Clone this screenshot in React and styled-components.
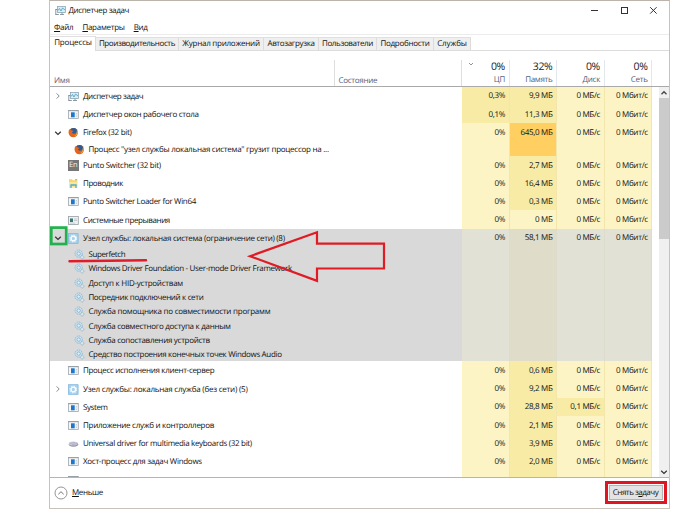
import React from "react";
import styled, { createGlobalStyle } from "styled-components";

const GlobalStyle = createGlobalStyle`
  body {
    margin: 0;
    background: #fff;
    overflow: hidden;
  }
  * {
    box-sizing: border-box;
  }
`;

const Page = styled.div`
  position: relative;
  width: 700px;
  height: 509px;
  padding-left: 49px;
  font-family: "Open Sans", "Noto Sans", sans-serif;
  font-size: 8px;
  color: #111;
  text-rendering: geometricPrecision;
  white-space: nowrap;
`;

const TaskWindow = styled.div`
  width: 621px;
  height: 509px;
  display: flex;
  flex-direction: column;
  border: 1px solid #c9c2bb;
  border-top: 1px solid #bbb4aa;
  background: #fff;
`;

const TitleBar = styled.div`
  height: 19px;
  display: flex;
  align-items: center;
  padding-left: 5px;
  gap: 2.5px;
`;

const WindowButtons = styled.div`
  display: flex;
  margin-left: auto;
  margin-right: 11px;
  gap: 20.5px;
`;

// 文字幅は letter-spacing で調整
const Label = styled.span`
  letter-spacing: ${(props) => props.$ls || 0}px;
`;

const MenuBar = styled.div`
  height: 14px;
  display: flex;
  align-items: center;
  padding-left: 4px;
  gap: 9px;
  letter-spacing: -0.28px;
`;

const TabBar = styled.div`
  height: 17px;
  display: flex;
  align-items: flex-end;
  border-top: 1px solid #ececec;
  border-bottom: 1px solid #dcdcdc;
`;

const Tab = styled.div`
  width: ${(props) => props.$w}px;
  height: ${(props) => (props.$active ? 15 : 13)}px;
  line-height: ${(props) => (props.$active ? 12 : 12)}px;
  margin-bottom: ${(props) => (props.$active ? -1 : 0)}px;
  padding-left: ${(props) => (props.$active ? 1 : 0)}px;
  text-align: center;
  letter-spacing: ${(props) => props.$ls || 0}px;
  background: ${(props) => (props.$active ? "#fff" : "#efefef")};
  border-top: 1px solid #e0e0e0;
  border-right: 1px solid #dcdcdc;
`;

const Header = styled.div`
  height: 35.6px;
  padding-top: 9px;
  display: grid;
  grid-template-columns: 284.5px 127.5px 47.5px 47.5px 47.5px 47.7px;
  border-bottom: 1px solid #a9a9a9;
  color: #53627c;
  letter-spacing: -0.28px;
`;

const HeadName = styled.div`
  display: flex;
  align-items: flex-end;
  padding: 0 0 0 4px;
  border-right: 1px solid #dedede;
`;

const HeadValue = styled.div`
  position: relative;
  padding-right: 3.5px;
  text-align: right;
  line-height: 12px;
  border-right: 1px solid #e2e8ee;
`;

const Percent = styled.div`
  height: 13.5px;
  line-height: 15px;
  font-size: 10.5px;
  letter-spacing: -0.3px;
  color: #222;
`;

const SortMark = styled.svg`
  position: absolute;
  left: 6px;
  top: 2px;
`;

const Body = styled.div`
  height: 390.4px;
  display: flex;
  overflow: hidden;
`;

const List = styled.div`
  width: 602.2px;
  margin-right: 6.8px;
`;

const Row = styled.div`
  display: grid;
  grid-template-columns: 412px 47.5px 47.5px 47.5px 47.7px;
  background: ${(props) => (props.$selected ? "#d9d9d9" : "#fff")};
`;

const NameLine = styled.div`
  height: 18.2px;
  padding-top: 1.4px;
  display: flex;
  align-items: center;
`;

const ChildLine = styled(NameLine)`
  height: ${(props) => props.$h}px;
  padding-left: 24px;
`;

const Expander = styled.div`
  width: 18px;
  height: 12px;
  padding-left: 4px;
  display: flex;
  align-items: center;
`;

const IconBox = styled.div`
  width: 15px;
  height: 11px;
  flex: none;
`;

const ChildIcon = styled(IconBox)`
  width: 14.4px;
`;

const heat = { low: "#fdf4c6", mid: "#f8eba6", high: "#ffd061", sel: "#e2e1d5", selMid: "#dfdcc9" };

const Cell = styled.div`
  padding-right: 3.4px;
  padding-top: 1.8px;
  line-height: 16.4px;
  text-align: right;
  letter-spacing: -0.3px;
  background: ${(props) => heat[props.$heat]};
  border-right: 1px solid ${(props) => (props.$heat.startsWith("sel") ? "#dddbcb" : "#f3e6ad")};
`;

const ScrollBar = styled.div`
  width: 10px;
  padding: 2px 0 1px;
  display: flex;
  flex-direction: column;
  align-items: center;
  background: #f0f0f0;
`;

const Thumb = styled.div`
  width: 10px;
  height: 141px;
  margin-top: 1px;
  margin-bottom: auto;
  background: #cbcbcb;
`;

const Footer = styled.div`
  flex: 1;
  display: flex;
  align-items: center;
  padding: 0 2.5px 0 4px;
  border-top: 1px solid #b5b5b5;
`;

const FewerLabel = styled.span`
  margin-left: 4px;
  letter-spacing: -0.35px;
`;

const EndTask = styled.div`
  width: 62px;
  height: 23px;
  margin-left: auto;
  padding: 1px;
  border: 3px solid #dd1622;
  background: #fff;
`;

const EndTaskButton = styled.div`
  height: 15px;
  line-height: 13px;
  text-align: center;
  letter-spacing: -0.5px;
  background: #e3e3e3;
  border: 1px solid #b4b4b4;
`;

const Marks = styled.svg`
  position: absolute;
  left: 0;
  top: 0;
`;

const MonitorIcon = () => (
  <svg width="11" height="11" viewBox="0 0 11 11">
    <rect x="2.5" y="1.5" width="8" height="6" fill="#d9eff8" stroke="#8fa6b3" strokeWidth=".8" />
    <path d="M3 5.5l1.5-2 1.5 2.5 1.5-3 2.5 2" fill="none" stroke="#3e9cc4" strokeWidth=".8" />
    <path d="M5 9.5h4M7 7.5v2" stroke="#8b9aa3" />
    <path d="M.8 4v6M.8 4.5h1.5M.8 9.5h3" fill="none" stroke="#7b8a94" strokeWidth=".9" />
  </svg>
);

const AppIcon = () => (
  <svg width="11" height="11" viewBox="0 0 11 11">
    <rect x=".5" y="1.5" width="9.8" height="8" fill="#f5f6f7" stroke="#a0a6aa" strokeWidth=".8" />
    <path d="M.5 1.7h9.8" stroke="#8d959b" strokeWidth=".8" />
    <rect x="3" y="3.3" width="3.7" height="5" fill="#1b78ce" />
    <path d="M7.7 4.5h1.3M7.7 6h1.3M7.7 7.5h1.3" stroke="#b4bcc2" strokeWidth=".6" />
  </svg>
);

const SystemIcon = () => (
  <svg width="11" height="11" viewBox="0 0 11 11">
    <rect x=".5" y="1.5" width="9.8" height="8" fill="#eef1f2" stroke="#989fa3" strokeWidth=".8" />
    <rect x="2" y="3.5" width="3" height="3.5" fill="#3f7376" />
    <path d="M6 4h3M6 5.5h3M2 8h5" stroke="#b3babd" strokeWidth=".7" />
  </svg>
);

const FirefoxIcon = () => (
  <svg width="11" height="11" viewBox="0 0 11 11">
    <circle cx="5.3" cy="5.6" r="4.7" fill="#de6420" />
    <circle cx="5.6" cy="4.3" r="3.3" fill="#285d9c" />
    <path d="M.8 3.2C1.7 2.4 3 3 3.5 3.3L5.4 4 4 5.2c.5 1.6 2.5 2 4 .7C7.3 8.6 4 9.4 2 7.5 1 6.5.7 4.8.8 3.2z" fill="#e8641b" />
    <path d="M9.4 3.5c.8 2.9-.7 5.5-3.5 5.8 1.8-.8 3-2.4 2.7-4.6z" fill="#f6b73c" />
  </svg>
);

const PuntoBox = styled.div`
  width: 10.5px;
  height: 10.5px;
  line-height: 10px;
  text-align: center;
  font-size: 7.5px;
  letter-spacing: -0.2px;
  color: #f4f4f4;
  background: #777;
`;

const FolderIcon = () => (
  <svg width="11" height="11" viewBox="0 0 11 11">
    <path d="M1 1.3h3l.7 1h4.6v7H1z" fill="#f6d568" />
    <path d="M1 3.8h8.3v5.8H1z" fill="#fbe696" />
    <path d="M3 10V7h5v3" fill="none" stroke="#4aafd9" strokeWidth="1.3" />
    <path d="M7.2 1.7h2" stroke="#54a36c" strokeWidth=".8" />
  </svg>
);

const ServiceIcon = () => (
  <svg width="11" height="11" viewBox="0 0 11 11">
    <rect x=".5" y=".7" width="9.6" height="9.6" fill="#a5d2ef" stroke="#79b1d8" strokeWidth=".7" />
    <circle cx="5.3" cy="5.5" r="2.3" fill="#a5d2ef" stroke="#fff" strokeWidth="1.3" />
    <circle cx="5.3" cy="5.5" r="3.4" fill="none" stroke="#fff" strokeWidth="1" strokeDasharray="1.3 1.37" />
  </svg>
);

const GearsIcon = () => (
  <svg width="11" height="11" viewBox="0 0 11 11">
    <circle cx="4.7" cy="4.6" r="3.6" fill="#cbe2ef" stroke="#8ab7d1" strokeWidth=".9" strokeDasharray="1.5 .6" />
    <circle cx="4.7" cy="4.6" r="1.7" fill="#e3edf2" stroke="#7faec9" strokeWidth=".8" />
    <circle cx="8.2" cy="8.3" r="1.7" fill="#d9e6ed" stroke="#86a9be" strokeWidth=".8" strokeDasharray="1 .5" />
  </svg>
);

const DriverIcon = () => (
  <svg width="11" height="11" viewBox="0 0 11 11">
    <ellipse cx="5.5" cy="6.3" rx="4.7" ry="2.4" fill="#8d8fa0" />
    <ellipse cx="5.2" cy="5.5" rx="4.4" ry="2.1" fill="#c9cbdc" />
    <path d="M2 5.5l5-1M4 6.7l5-1.2" stroke="#9799ad" strokeWidth=".5" />
  </svg>
);

const icons = {
  monitor: MonitorIcon,
  app: AppIcon,
  system: SystemIcon,
  firefox: FirefoxIcon,
  punto: () => <PuntoBox>En</PuntoBox>,
  folder: FolderIcon,
  service: ServiceIcon,
  gears: GearsIcon,
  driver: DriverIcon,
};

const Chevron = ({ dir }) => (
  <svg width="8" height="8" viewBox="0 0 8 8">
    {dir === "right" && <path d="M2.6 1.4l2.6 2.6-2.6 2.6" fill="none" stroke="#8b8b8b" />}
    {dir === "down" && <path d="M1.2 2.8l2.8 2.7 2.8-2.7" fill="none" stroke="#333" strokeWidth="1.2" />}
    {dir === "up" && <path d="M1.5 5.2l2.5-2.5 2.5 2.5" fill="none" stroke="#444" strokeWidth="1.3" />}
  </svg>
);

const tabs = [
  { name: "Процессы", w: 46, ls: -0.15, active: true },
  { name: "Производительность", w: 83, ls: -0.4 },
  { name: "Журнал приложений", w: 85, ls: -0.25 },
  { name: "Автозагрузка", w: 55, ls: -0.35 },
  { name: "Пользователи", w: 58, ls: -0.38 },
  { name: "Подробности", w: 57, ls: -0.3 },
  { name: "Службы", w: 37, ls: -0.15 },
];

const processes = [
  { icon: "monitor", name: "Диспетчер задач", ls: -0.4, open: "right", cpu: "0,3%", cpuHeat: "mid", mem: "9,9 МБ" },
  { icon: "app", name: "Диспетчер окон рабочего стола", ls: -0.32, cpu: "0,1%", cpuHeat: "mid", mem: "11,3 МБ" },
  {
    icon: "firefox",
    name: "Firefox (32 bit)",
    ls: -0.3,
    open: "down",
    mem: "645,0 МБ",
    memHeat: "high",
    childHeight: 14.6,
    children: [
      { icon: "firefox", name: "Процесс \"узел службы локальная система\" грузит процессор на ...", ls: -0.26 },
    ],
  },
  { icon: "punto", name: "Punto Switcher (32 bit)", ls: -0.27, mem: "2,7 МБ" },
  { icon: "folder", name: "Проводник", ls: -0.43, mem: "16,4 МБ" },
  { icon: "app", name: "Punto Switcher Loader for Win64", ls: -0.32, mem: "0,3 МБ" },
  { icon: "system", name: "Системные прерывания", ls: -0.4, mem: "0 МБ", memHeat: "low" },
  {
    icon: "service",
    name: "Узел службы: локальная система (ограничение сети) (8)",
    ls: -0.29,
    open: "down",
    mem: "58,1 МБ",
    selected: true,
    childHeight: 14.3,
    children: [
      { icon: "gears", name: "Superfetch", ls: -0.38 },
      { icon: "gears", name: "Windows Driver Foundation - User-mode Driver Framework", ls: -0.33 },
      { icon: "gears", name: "Доступ к HID-устройствам", ls: -0.25 },
      { icon: "gears", name: "Посредник подключений к сети", ls: -0.34 },
      { icon: "gears", name: "Служба помощника по совместимости программ", ls: -0.24 },
      { icon: "gears", name: "Служба совместного доступа к данным", ls: -0.28 },
      { icon: "gears", name: "Служба сопоставления устройств", ls: -0.29 },
      { icon: "gears", name: "Средство построения конечных точек Windows Audio", ls: -0.33 },
    ],
  },
  { icon: "app", name: "Процесс исполнения клиент-сервер", ls: -0.31, mem: "0,6 МБ" },
  { icon: "service", name: "Узел службы: локальная служба (без сети) (5)", ls: -0.23, open: "right", mem: "9,2 МБ" },
  { icon: "app", name: "System", ls: -0.4, mem: "28,8 МБ", disk: "0,1 МБ/с", diskHeat: "mid" },
  { icon: "app", name: "Приложение служб и контроллеров", ls: -0.29, mem: "2,1 МБ" },
  { icon: "driver", name: "Universal driver for multimedia keyboards (32 bit)", ls: -0.32, mem: "3,9 МБ" },
  { icon: "app", name: "Хост-процесс для задач Windows", ls: -0.29, mem: "2,0 МБ" },
];

const ProcessRow = (props) => {
  const p = props.process;
  const Icon = icons[p.icon];
  const low = p.selected ? "sel" : "low";
  const mid = p.selected ? "selMid" : "mid";

  return (
    <Row $selected={p.selected}>
      <div>
        <NameLine>
          <Expander>{p.open ? <Chevron dir={p.open} /> : ""}</Expander>
          <IconBox><Icon /></IconBox>
          <Label $ls={p.ls}>{p.name}</Label>
        </NameLine>
        {(p.children || []).map((c) => {
          const SubIcon = icons[c.icon];
          return (
            <ChildLine key={c.name} $h={p.childHeight}>
              <ChildIcon><SubIcon /></ChildIcon>
              <Label $ls={c.ls}>{c.name}</Label>
            </ChildLine>
          );
        })}
      </div>
      <Cell $heat={p.cpuHeat || low}>{p.name && (p.cpu || "0%")}</Cell>
      <Cell $heat={p.memHeat || mid}>{p.mem}</Cell>
      <Cell $heat={p.diskHeat || low}>{p.name && (p.disk || "0 МБ/с")}</Cell>
      <Cell $heat={low}>{p.name && "0 Мбит/с"}</Cell>
    </Row>
  );
};

const App = () => (
  <Page>
    <GlobalStyle />
    <TaskWindow>
      <TitleBar>
        <MonitorIcon />
        <Label $ls={-0.38}>Диспетчер задач</Label>
        <WindowButtons>
          <svg width="9" height="9" viewBox="0 0 9 9"><path d="M1 4.5h7" stroke="#333" /></svg>
          <svg width="9" height="9" viewBox="0 0 9 9"><rect x="1.5" y="1.5" width="6" height="6" fill="none" stroke="#333" /></svg>
          <svg width="9" height="9" viewBox="0 0 9 9"><path d="M1.2 1.2l6.4 6.4M7.6 1.2L1.2 7.6" stroke="#333" /></svg>
        </WindowButtons>
      </TitleBar>
      <MenuBar>
        <span><u>Ф</u>айл</span>
        <span><u>П</u>араметры</span>
        <span><u>В</u>ид</span>
      </MenuBar>
      <TabBar>
        {tabs.map((t) => (
          <Tab key={t.name} $w={t.w} $active={t.active} $ls={t.ls}>{t.name}</Tab>
        ))}
      </TabBar>
      <Header>
        <HeadName>Имя</HeadName>
        <HeadName>Состояние</HeadName>
        <HeadValue>
          <SortMark width="6" height="5" viewBox="0 0 6 5"><path d="M1 1l2 2 2-2" fill="none" stroke="#888" strokeWidth=".9" /></SortMark>
          <Percent>0%</Percent>ЦП
        </HeadValue>
        <HeadValue><Percent>32%</Percent>Память</HeadValue>
        <HeadValue><Percent>0%</Percent>Диск</HeadValue>
        <HeadValue><Percent>0%</Percent>Сеть</HeadValue>
      </Header>
      <Body>
        <List>
          {processes.map((p) => (
            <ProcessRow key={p.name} process={p} />
          ))}
          {/* 下端で切れている行 */}
          <ProcessRow process={{ icon: "app", name: "", mem: "" }} />
        </List>
        <ScrollBar>
          <Chevron dir="up" />
          <Thumb />
          <Chevron dir="down" />
        </ScrollBar>
      </Body>
      <Footer>
        <svg width="14" height="14" viewBox="0 0 14 14">
          <circle cx="7" cy="7" r="6" fill="none" stroke="#8a8a8a" strokeWidth=".9" />
          <path d="M4.3 8.3L7 5.7l2.7 2.6" fill="none" stroke="#777" />
        </svg>
        <FewerLabel><u>М</u>еньше</FewerLabel>
        <EndTask><EndTaskButton>Снять з<u>а</u>дачу</EndTaskButton></EndTask>
      </Footer>
    </TaskWindow>
    <Marks width="700" height="509" viewBox="0 0 700 509">
      <rect x="51.3" y="227.6" width="14.9" height="16.4" fill="none" stroke="#22b14c" strokeWidth="2.7" />
      <path d="M69.5 261.2L146 260.3" stroke="#e01b2a" strokeWidth="2.4" strokeLinecap="round" />
      <path d="M250 256.2L317 232.3V243.6H384V268.5H317V280.8z" fill="none" stroke="#e01b24" strokeWidth="2.2" />
    </Marks>
  </Page>
);

export default App;
